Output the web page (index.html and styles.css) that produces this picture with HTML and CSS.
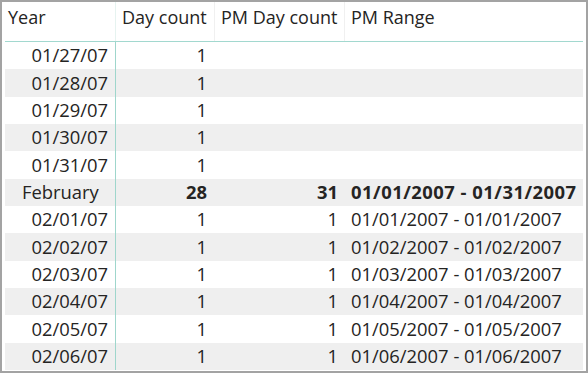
FILE: index.html
```html
<!DOCTYPE html>
<html>
<head>
<meta charset="utf-8">
<link rel="stylesheet" href="styles.css">
</head>
<body>
<div class="frame">
  <div class="matrix">
    <div class="row head">
      <div class="c c1 hd">Year</div>
      <div class="c c2 hd">Day count</div>
      <div class="c c3 hd">PM Day count</div>
      <div class="c c4 hd">PM Range</div>
    </div>
    <div class="row"><div class="c c1">01/27/07</div><div class="c c2">1</div><div class="c c3"></div><div class="c c4"></div></div>
    <div class="row alt"><div class="c c1">01/28/07</div><div class="c c2">1</div><div class="c c3"></div><div class="c c4"></div></div>
    <div class="row"><div class="c c1">01/29/07</div><div class="c c2">1</div><div class="c c3"></div><div class="c c4"></div></div>
    <div class="row alt"><div class="c c1">01/30/07</div><div class="c c2">1</div><div class="c c3"></div><div class="c c4"></div></div>
    <div class="row"><div class="c c1">01/31/07</div><div class="c c2">1</div><div class="c c3"></div><div class="c c4"></div></div>
    <div class="row alt total"><div class="c c1 month">February</div><div class="c c2">28</div><div class="c c3">31</div><div class="c c4">01/01/2007 - 01/31/2007</div></div>
    <div class="row"><div class="c c1">02/01/07</div><div class="c c2">1</div><div class="c c3">1</div><div class="c c4">01/01/2007 - 01/01/2007</div></div>
    <div class="row alt"><div class="c c1">02/02/07</div><div class="c c2">1</div><div class="c c3">1</div><div class="c c4">01/02/2007 - 01/02/2007</div></div>
    <div class="row"><div class="c c1">02/03/07</div><div class="c c2">1</div><div class="c c3">1</div><div class="c c4">01/03/2007 - 01/03/2007</div></div>
    <div class="row alt"><div class="c c1">02/04/07</div><div class="c c2">1</div><div class="c c3">1</div><div class="c c4">01/04/2007 - 01/04/2007</div></div>
    <div class="row"><div class="c c1">02/05/07</div><div class="c c2">1</div><div class="c c3">1</div><div class="c c4">01/05/2007 - 01/05/2007</div></div>
    <div class="row alt"><div class="c c1">02/06/07</div><div class="c c2">1</div><div class="c c3">1</div><div class="c c4">01/06/2007 - 01/06/2007</div></div>
  </div>
</div>
</body>
</html>
```
FILE: styles.css
```css
html, body {
  margin: 0;
  padding: 0;
  background: #ffffff;
}
.frame {
  width: 588px;
  height: 373px;
  box-sizing: border-box;
  border: 2px solid #a3a3a3;
  padding: 0 3px;
  overflow: hidden;
  background: #fff;
}
.matrix {
  font-family: "Open Sans", "Noto Sans", sans-serif;
  font-size: 18.4px;
  color: #252423;
}
.row {
  display: grid;
  grid-template-columns: 111px 99px 130px 238px;
  height: 27.33px;
  align-items: center;
}
.row.alt {
  background: #efefef;
}
.row.head {
  height: 39px;
  border-bottom: 1.5px solid #a2d8cf;
  align-items: stretch;
}
.c {
  height: 100%;
  display: flex;
  align-items: center;
  justify-content: flex-end;
  box-sizing: border-box;
  white-space: nowrap;
  line-height: 1;
}
.c1 {
  border-right: 1.5px solid #9fd6cc;
  padding-right: 7px;
}
.c2 { padding-right: 8px; }
.c3 { padding-right: 7px; }
.c4 { justify-content: flex-start; padding-left: 6px; }
.hd {
  justify-content: flex-start;
  align-items: flex-start;
  padding: 6px 0 0 6px;
  font-size: 18px;
  border-right: 1px solid #f0f0f0;
}
.head .c1 { padding-left: 3px; border-right: 1px solid #e6f3f0; }
.head .c4 { border-right: none; }
.total .c {
  font-weight: 700;
}
.total .c4 {
  letter-spacing: 0.5px;
}
.total .c1 {
  font-weight: 400;
  justify-content: flex-start;
  padding-left: 17px;
}
```
